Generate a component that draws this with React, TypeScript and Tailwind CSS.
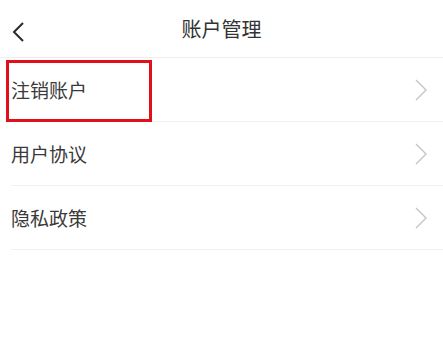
const items = ['注销账户', '用户协议', '隐私政策']

function Arrow() {
  return (
    <svg width="14" height="24" viewBox="0 0 14 24" fill="none" className="shrink-0">
      <path d="M2 2 L12 12 L2 22" stroke="#c4c4c4" strokeWidth="1.4" />
    </svg>
  )
}

export default function App() {
  return (
    <div className="w-[443px] h-[337px] bg-white text-[#333]" style={{ fontFamily: '"Noto Sans CJK SC", "Noto Sans", sans-serif' }}>
      <div className="relative h-[58px] flex items-center justify-center border-b border-[#eeeeee]">
        <svg className="absolute left-[11px] top-[21px]" width="14" height="22" viewBox="0 0 14 22" fill="none">
          <path d="M12 2 L3 11 L12 20" stroke="#2a2a2a" strokeWidth="2" />
        </svg>
        <span className="text-[20px] leading-none text-[#333]">账户管理</span>
      </div>
      <div className="pl-[11px]">
        {items.map((t, i) => (
          <div key={t} className="relative h-[64px] flex items-center justify-between pr-[15px] border-b border-[#f0f0f0]">
            {i === 0 && (
              <div className="absolute left-[-5px] top-[2px] w-[146px] h-[62px] border-[3px] border-[#e0101a]" />
            )}
            <span className="text-[19px] leading-none text-[#3a3a3a]">{t}</span>
            <Arrow />
          </div>
        ))}
      </div>
    </div>
  )
}
